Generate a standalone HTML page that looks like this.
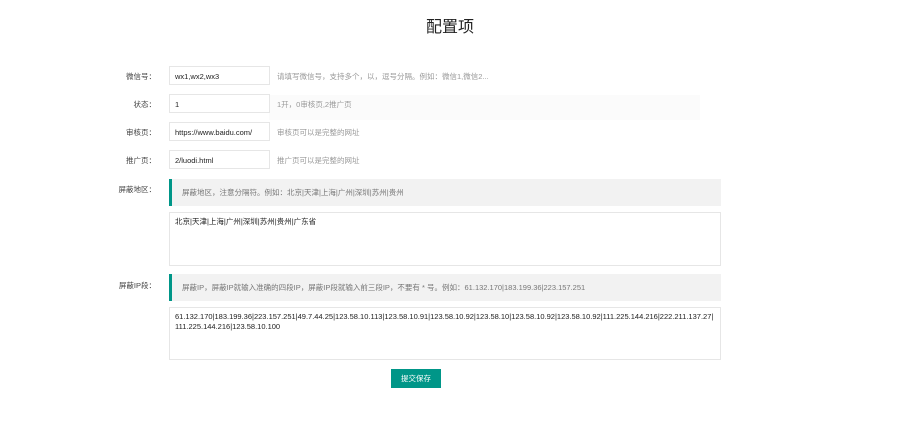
<!DOCTYPE html>
<html><head><meta charset="utf-8"><style>
body{margin:0;width:900px;height:432px;background:#fff;font-family:"Liberation Sans","Noto Sans CJK SC",sans-serif;position:relative;overflow:hidden;color:#333}
.a{position:absolute}
h1{position:absolute;top:13px;left:0;width:900px;text-align:center;font-size:16px;font-weight:normal;margin:0;color:#222}
.lb{position:absolute;width:60px;left:96px;text-align:right;font-size:7.5px;color:#444}
.in{position:absolute;left:169px;width:101px;height:19px;border:1px solid #e6e6e6;font-size:7.5px;line-height:19px;padding-left:5px;box-sizing:border-box;color:#222;background:#fff}
.tip{position:absolute;left:277px;font-size:7.5px;color:#999}
.bq{position:absolute;left:169px;width:552px;background:#f2f2f2;border-left:3px solid #009688;box-sizing:border-box;font-size:7.5px;color:#777;padding-left:10px}
.ta{position:absolute;left:169px;width:552px;border:1px solid #e6e6e6;box-sizing:border-box;font-size:7.5px;color:#222;padding:4px 5px;line-height:10px}
</style></head><body>
<h1>配置项</h1>
<div class="a" style="left:269px;top:95px;width:431px;height:25px;background:#fbfbfb"></div>
<div class="lb" style="top:71px">微信号：</div><div class="in" style="top:66px">wx1,wx2,wx3</div><div class="tip" style="top:71px">请填写微信号，支持多个，以，逗号分隔。例如：微信1,微信2...</div>
<div class="lb" style="top:99px">状态：</div><div class="in" style="top:94px">1</div><div class="tip" style="top:99px">1开，0审核页,2推广页</div>
<div class="lb" style="top:127px">审核页：</div><div class="in" style="top:122px">https://www.baidu.com/</div><div class="tip" style="top:127px">审核页可以是完整的网址</div>
<div class="lb" style="top:155px">推广页：</div><div class="in" style="top:150px">2/luodi.html</div><div class="tip" style="top:155px">推广页可以是完整的网址</div>
<div class="lb" style="top:184px">屏蔽地区：</div>
<div class="bq" style="top:179px;height:27px;line-height:27px">屏蔽地区，注意分隔符。例如：北京|天津|上海|广州|深圳|苏州|贵州</div>
<div class="ta" style="top:212px;height:54px">北京|天津|上海|广州|深圳|苏州|贵州|广东省</div>
<div class="lb" style="top:280px">屏蔽IP段：</div>
<div class="bq" style="top:274px;height:27px;line-height:27px">屏蔽IP，屏蔽IP就输入准确的四段IP，屏蔽IP段就输入前三段IP，不要有 * 号。例如：61.132.170|183.199.36|223.157.251</div>
<div class="ta" style="top:307px;height:53px">61.132.170|183.199.36|223.157.251|49.7.44.25|123.58.10.113|123.58.10.91|123.58.10.92|123.58.10|123.58.10.92|123.58.10.92|111.225.144.216|222.211.137.27|<br>111.225.144.216|123.58.10.100</div>
<div class="a" style="left:391px;top:369px;width:50px;height:19px;background:#009688;color:#fff;font-size:7.5px;line-height:19px;text-align:center">提交保存</div>
</body></html>
